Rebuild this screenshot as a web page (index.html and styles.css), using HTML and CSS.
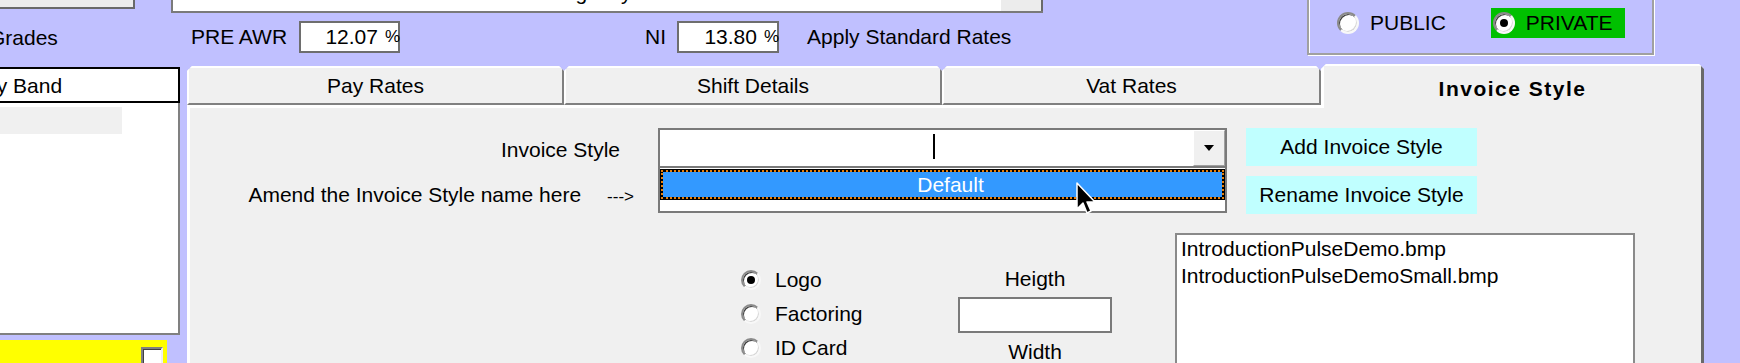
FILE: index.html
```html
<!DOCTYPE html>
<html lang="en">
<head>
    <meta charset="UTF-8">
    <title>Invoice Style</title>
    <link rel="stylesheet" href="styles.css">
</head>
<body>
    <div class="form">
        <!-- top strip: agency combo, rates, sector -->
        <div class="top">
            <div class="col-left">
                <div class="btn-top"></div>
                <div class="lbl-grades">Grades</div>
            </div>
            <div class="col-mid">
                <div class="combo-top">
                    <span class="combo-top-text">Agency</span>
                    <span class="combo-top-btn"></span>
                </div>
                <div class="rates-row">
                    <span class="lbl-awr">PRE AWR</span>
                    <span class="pct-box pct-awr"><span class="pct-val">12.07</span><span class="pct-sign">%</span></span>
                    <span class="lbl-ni">NI</span>
                    <span class="pct-box pct-ni"><span class="pct-val">13.80</span><span class="pct-sign">%</span></span>
                    <span class="lbl-apply">Apply Standard Rates</span>
                </div>
            </div>
            <div class="sector">
                <div class="opt"><span class="radio"></span>PUBLIC</div>
                <div class="opt opt-on"><span class="radio checked"></span>PRIVATE</div>
            </div>
        </div>

        <div class="main">
            <div class="side">
                <div class="band-head"><span>Pay Band</span></div>
                <div class="band-rows"><div class="band-sel"></div></div>
                <div class="yellow-bar"><span class="chk"></span></div>
            </div>

            <div class="tabs-wrap">
                <div class="tab-strip">
                    <div class="tab">Pay Rates</div>
                    <div class="tab">Shift Details</div>
                    <div class="tab">Vat Rates</div>
                    <div class="tab active">Invoice Style</div>
                </div>
                <div class="panel">
                    <div class="style-row">
                        <div class="style-labels">
                            <div class="lbl-style">Invoice Style</div>
                            <div class="lbl-amend"><span>Amend the Invoice Style name here</span><span class="arrow">---&gt;</span></div>
                        </div>
                        <div class="style-combo">
                            <div class="combo-edit">
                                <span class="caret"></span>
                                <span class="combo-edit-btn"><span class="tri"></span></span>
                            </div>
                            <div class="combo-list">
                                <div class="combo-item"><span>Default</span></div>
                            </div>
                            <svg class="cursor" width="22" height="34" viewBox="0 0 22 34">
                                <path d="M1 1 L1 27 L7 21 L11 31 L15 29 L11 20 L19 20 Z" fill="#000" stroke="#fff" stroke-width="1.5" stroke-linejoin="round"/>
                            </svg>
                        </div>
                        <div class="style-btns">
                            <div class="cyan-btn">Add Invoice Style</div>
                            <div class="cyan-btn">Rename Invoice Style</div>
                        </div>
                    </div>

                    <div class="options-row">
                        <div class="logo-opts">
                            <div class="opt2"><span class="radio sm checked"></span>Logo</div>
                            <div class="opt2"><span class="radio sm"></span>Factoring</div>
                            <div class="opt2"><span class="radio sm"></span>ID Card</div>
                        </div>
                        <div class="size-col">
                            <div>Heigth</div>
                            <div class="size-input"></div>
                            <div class="lbl-width">Width</div>
                        </div>
                        <div class="file-list">
                            <div>IntroductionPulseDemo.bmp</div>
                            <div>IntroductionPulseDemoSmall.bmp</div>
                        </div>
                    </div>
                </div>
            </div>
        </div>
    </div>
</body>
</html>
```

FILE: styles.css
```css
:root {
    --lavender: #c0c0ff;
    --face: #f0f0f0;
    --edge: #7a7a7a;
    --dark: #696969;
    --cyan: #c0ffff;
}

* {
    margin: 0;
    padding: 0;
    box-sizing: border-box;
}

body {
    font-family: "Liberation Sans", Arial, sans-serif;
    font-size: 21px;
    line-height: 24px;
    color: #000;
    background: var(--lavender);
    width: 1740px;
    height: 363px;
    overflow: hidden;
    white-space: nowrap;
}

/* Top strip */
.top {
    display: flex;
    align-items: flex-start;
    height: 64px;
}

.col-left {
    width: 135px;
    flex: none;
}

.btn-top {
    height: 9px;
    margin-left: -4px;
    background: #ececec;
    border-right: 2px solid var(--dark);
    border-bottom: 2px solid var(--dark);
}

.lbl-grades {
    margin-top: 17px;
    margin-left: -11px;
}

.col-mid {
    width: 872px;
    margin-left: 36px;
    flex: none;
}

.combo-top {
    display: flex;
    height: 13px;
    background: #fff;
    border-left: 2px solid var(--edge);
    border-bottom: 2px solid var(--edge);
    overflow: hidden;
}

.combo-top-text {
    flex: 1;
    text-align: center;
    padding-left: 20px;
    margin-top: -19px;
    height: 24px;
}

.combo-top-btn {
    width: 43px;
    flex: none;
    background: #ececec;
    border-left: 1px solid #fff;
    border-right: 2px solid var(--dark);
}

.rates-row {
    display: flex;
    align-items: center;
    height: 32px;
    margin-top: 8px;
}

.lbl-awr {
    margin-left: 20px;
}

.pct-box {
    display: flex;
    align-items: center;
    justify-content: flex-end;
    height: 32px;
    background: #fff;
    border: 2px solid #6e6e6e;
}

.pct-awr {
    width: 101px;
    margin-left: 12px;
}

.pct-ni {
    width: 102px;
    margin-left: 11px;
}

.pct-val {
    margin-right: 7px;
}

.pct-sign {
    font-size: 17px;
    margin-right: -2px;
}

.lbl-ni {
    margin-left: 245px;
}

.lbl-apply {
    margin-left: 28px;
}

/* Public / private group */
.sector {
    display: flex;
    align-items: flex-start;
    width: 347px;
    height: 65px;
    margin-top: -10px;
    margin-left: 264px;
    padding: 16px 0 0 28px;
    border: 2px solid #a0a0a0;
    box-shadow: 1px 1px 0 #fff, inset 1px 1px 0 #fff;
}

.opt {
    display: flex;
    align-items: center;
    gap: 11px;
    height: 30px;
}

.opt-on {
    margin-left: 45px;
    padding: 0 12px 0 2px;
    background: #00c000;
}

.radio {
    position: relative;
    width: 22px;
    height: 22px;
    flex: none;
    border-radius: 50%;
    background: #fff;
    border: 2px solid;
    border-color: #8a8a8a #f8f8f8 #f8f8f8 #8a8a8a;
    box-shadow: inset 1px 1px 0 #404040, inset -1px -1px 0 #d8d8d8;
}

.radio.sm {
    width: 20px;
    height: 20px;
}

.radio.checked::after {
    content: '';
    position: absolute;
    left: 50%;
    top: 50%;
    width: 8px;
    height: 8px;
    margin: -4px 0 0 -4px;
    border-radius: 50%;
    background: #000;
}

/* Main area */
.main {
    display: flex;
    height: 299px;
}

.side {
    width: 180px;
    flex: none;
    padding-top: 3px;
}

.band-head {
    height: 36px;
    padding-top: 2px;
    line-height: 30px;
    background: #fff;
    border: 2px solid #000;
    border-left: 0;
    overflow: hidden;
}

.band-head span {
    margin-left: -29px;
}

.band-rows {
    height: 232px;
    padding-top: 4px;
    background: #fff;
    border-right: 2px solid #808080;
    border-bottom: 2px solid #808080;
}

.band-sel {
    width: 122px;
    height: 27px;
    background: var(--face);
}

.yellow-bar {
    width: 167px;
    height: 30px;
    margin-top: 5px;
    padding: 7px 0 0 141px;
    background: #ffff00;
}

.chk {
    display: block;
    width: 22px;
    height: 22px;
    background: #fff;
    border: 2px solid;
    border-color: #808080 #f0f0f0 #f0f0f0 #808080;
    box-shadow: inset 1px 1px 0 #404040;
}

/* Tabs */
.tabs-wrap {
    width: 1517px;
    margin-left: 7px;
    flex: none;
}

.tab-strip {
    display: grid;
    grid-template-columns: 377px 378px 379px 383px;
    align-items: end;
    height: 41px;
}

.tab {
    display: flex;
    align-items: center;
    justify-content: center;
    height: 39px;
    background: var(--face);
    border: 2px solid;
    border-color: #fff #808080 #808080 #fff;
    clip-path: polygon(5px 0, calc(100% - 5px) 0, 100% 5px, 100% 100%, 0 100%, 0 5px);
}

.tab.active {
    position: relative;
    z-index: 1;
    height: 44px;
    margin-bottom: -3px;
    padding-top: 4px;
    border-bottom: 0;
    border-left-width: 3px;
    border-right: 3px solid var(--dark);
    font-weight: bold;
    letter-spacing: 1.5px;
}

.panel {
    height: 260px;
    padding-top: 20px;
    background: var(--face);
    border-top: 3px solid #fff;
    border-left: 3px solid #fff;
    border-right: 3px solid var(--dark);
}

.style-row {
    display: flex;
    align-items: flex-start;
}

.style-labels {
    display: flex;
    flex-direction: column;
    align-items: flex-end;
    width: 444px;
    flex: none;
}

.lbl-style {
    margin-top: 10px;
    margin-right: 14px;
}

.lbl-amend {
    display: flex;
    align-items: baseline;
    gap: 26px;
    margin-top: 21px;
}

.arrow {
    font-size: 17px;
}

.style-combo {
    position: relative;
    width: 569px;
    flex: none;
    margin-left: 24px;
}

.combo-edit {
    display: flex;
    height: 40px;
    background: #fff;
    border: 2px solid var(--edge);
}

.caret {
    width: 2px;
    height: 25px;
    margin: 4px 0 0 273px;
    background: #000;
}

.combo-edit-btn {
    display: flex;
    align-items: center;
    justify-content: center;
    width: 32px;
    margin-left: auto;
    background: var(--face);
    border-top: 1px solid #fff;
    border-left: 1px solid #fff;
    border-right: 1px solid #a0a0a0;
    border-bottom: 1px solid #a0a0a0;
}

.tri {
    width: 0;
    height: 0;
    border-left: 5px solid transparent;
    border-right: 5px solid transparent;
    border-top: 6px solid #000;
}

.combo-list {
    height: 45px;
    padding-top: 1px;
    background: #fff;
    border: 2px solid var(--edge);
    border-top: 0;
}

.combo-item {
    height: 31px;
    padding: 1px;
    background: #000;
}

.combo-item span {
    display: block;
    height: 100%;
    padding: 2px 0 0 16px;
    line-height: 22px;
    text-align: center;
    color: #fff;
    background: #3399ff;
    background-clip: padding-box;
    border: 2px dotted #e8800c;
}

.cursor {
    position: absolute;
    left: 418px;
    top: 54px;
}

.style-btns {
    display: flex;
    flex-direction: column;
    gap: 10px;
    width: 231px;
    margin-left: 19px;
}

.cyan-btn {
    height: 38px;
    line-height: 38px;
    text-align: center;
    background: var(--cyan);
}

/* Logo options, size and picture list */
.options-row {
    display: flex;
    align-items: flex-start;
    margin-top: 19px;
}

.logo-opts {
    width: 217px;
    flex: none;
    margin-left: 551px;
    padding-top: 30px;
}

.opt2 {
    display: flex;
    align-items: center;
    gap: 14px;
    height: 34px;
}

.size-col {
    width: 154px;
    flex: none;
    padding-top: 34px;
    text-align: center;
}

.size-input {
    height: 36px;
    margin-top: 6px;
    background: #fff;
    border: 2px solid var(--edge);
}

.lbl-width {
    margin-top: 7px;
}

.file-list {
    width: 460px;
    height: 150px;
    flex: none;
    margin-left: 63px;
    padding: 0 4px;
    line-height: 27px;
    background: #fff;
    border: 2px solid #8a8a8a;
}
```
